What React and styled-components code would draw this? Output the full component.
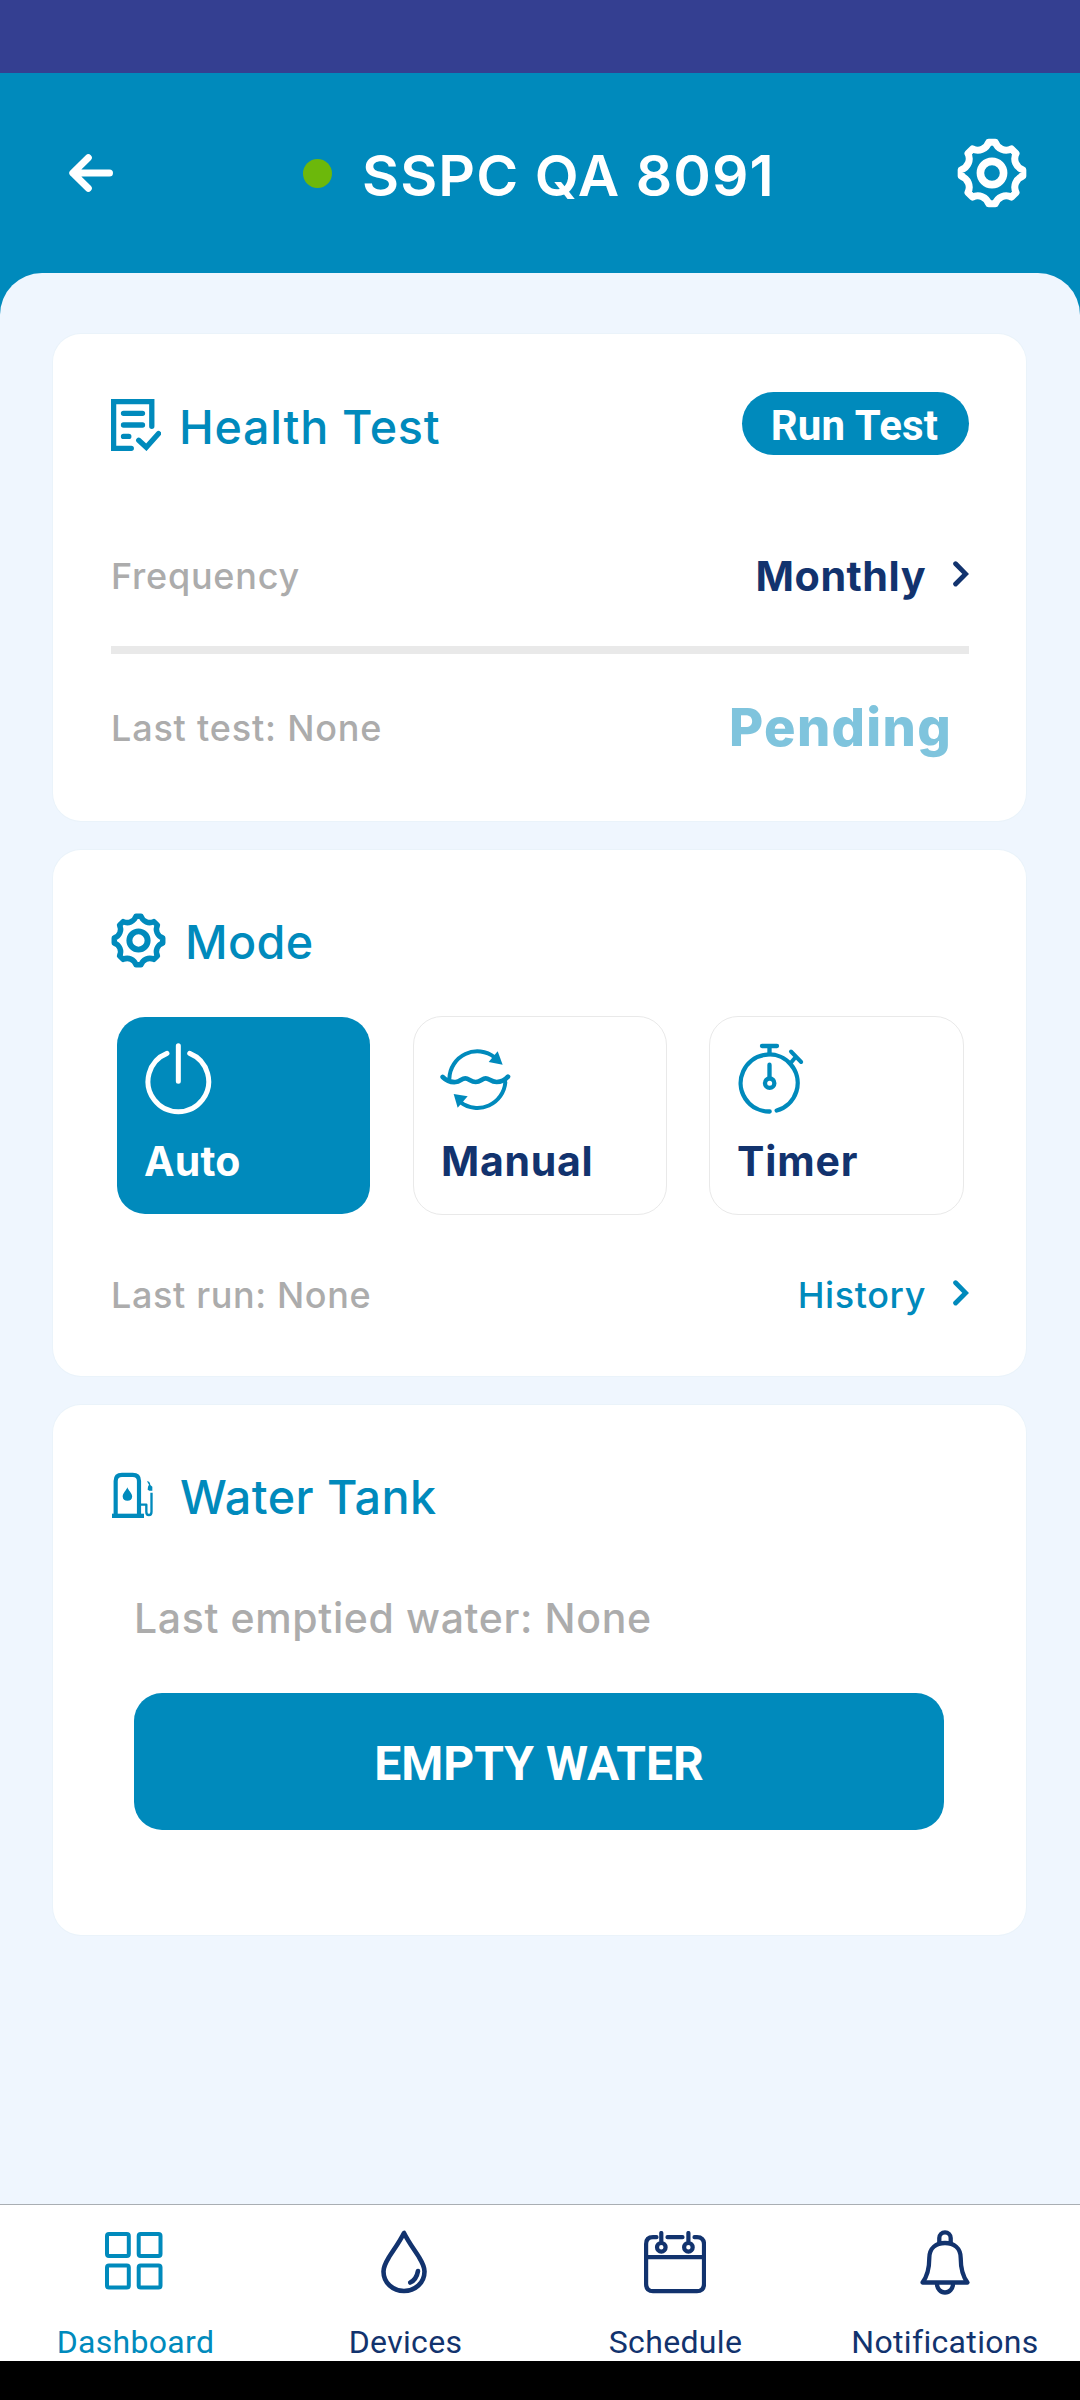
import React from "react";
import styled, { createGlobalStyle, ThemeProvider } from "styled-components";

const theme = {
  blue: "#008abc",
  navy: "#12336e",
  purple: "#343f91",
  page: "#eff6fe",
  grey: "#acacac",
  line: "#e9e9e9",
  pending: "#7fc4dd",
  green: "#6cb80b",
};

const GlobalStyle = createGlobalStyle`
  * { box-sizing: border-box; }
  body { margin: 0; background: #000; }
`;

const Screen = styled.div`
  display: flex;
  flex-direction: column;
  width: 1080px;
  height: 2400px;
  overflow: hidden;
  font-family: Inter, "Liberation Sans", sans-serif;
  background: ${(p) => p.theme.blue};
`;

const StatusBar = styled.div`
  flex: none;
  height: 73px;
  background: ${(p) => p.theme.purple};
`;

const Header = styled.header`
  flex: none;
  display: grid;
  grid-template-columns: 44px 1fr 70px;
  align-items: center;
  height: 200px;
  padding: 0 53px 0 69px;
  color: #fff;
`;

const DeviceTitle = styled.div`
  display: flex;
  align-items: center;
  gap: 30px;
  padding-left: 190px;
`;

const StatusDot = styled.span`
  width: 29px;
  height: 29px;
  border-radius: 50%;
  background: ${(p) => p.theme.green};
`;

const Title = styled.h1`
  margin: 0;
  padding-top: 5px;
  font-size: 57px;
  font-weight: 600;
  line-height: 60px;
  letter-spacing: 1.1px;
  white-space: nowrap;
`;

const Content = styled.main`
  flex: 1;
  display: flex;
  flex-direction: column;
  gap: 29px;
  padding: 61px 54px 0 53px;
  border-radius: 42px 42px 0 0;
  background: ${(p) => p.theme.page};
`;

const Card = styled.section`
  display: flex;
  flex-direction: column;
  height: ${(p) => p.$height}px;
  padding: ${(p) => p.$top}px 57px 0 58px;
  border-radius: 28px;
  background: #fff;
  box-shadow: 0 0 0 1px #eaf3fa;
`;

const Row = styled.div`
  display: flex;
  align-items: center;
  justify-content: space-between;
  height: ${(p) => p.$height || 50}px;
  margin-top: ${(p) => p.$gap || 0}px;
`;

const Heading = styled.div`
  display: flex;
  align-items: center;
  gap: ${(p) => p.$gap}px;
  height: ${(p) => p.$height}px;
  padding-top: ${(p) => p.$top || 0}px;
  color: ${(p) => p.theme.blue};
`;

const HeadingText = styled.h2`
  margin: 0;
  padding-top: ${(p) => p.$drop || 4}px;
  font-size: 46.7px;
  font-weight: 500;
  line-height: 50px;
  letter-spacing: ${(p) => p.$spacing}px;
  white-space: nowrap;
`;

const Muted = styled.span`
  font-size: ${(p) => (p.$large ? 41 : 36)}px;
  font-weight: 500;
  line-height: 50px;
  letter-spacing: ${(p) => p.$spacing}px;
  color: ${(p) => p.theme.grey};
  white-space: nowrap;
`;

const RunButton = styled.button`
  width: 227px;
  height: 63px;
  padding: 4px 2px 0 0;
  border: 0;
  border-radius: 32px;
  background: ${(p) => p.theme.blue};
  color: #fff;
  font: 700 42px/59px Roboto, sans-serif;
  letter-spacing: 0.2px;
`;

const Link = styled.a`
  display: flex;
  align-items: center;
  gap: 27px;
  color: ${(p) => (p.$strong ? p.theme.navy : p.theme.blue)};
  font-size: ${(p) => (p.$strong ? 41.3 : 36)}px;
  font-weight: ${(p) => (p.$strong ? 700 : 500)};
  line-height: 50px;
  letter-spacing: ${(p) => (p.$strong ? 0.5 : 0.6)}px;
`;

const Divider = styled.hr`
  width: 100%;
  height: 8px;
  margin: 45px 0 0;
  border: 0;
  background: ${(p) => p.theme.line};
`;

const Pending = styled.strong`
  margin-right: 17px;
  font-size: 52.5px;
  font-weight: 800;
  line-height: 59px;
  letter-spacing: 1.3px;
  color: ${(p) => p.theme.pending};
`;

const Modes = styled.div`
  display: grid;
  grid-template-columns: 255px 254px 255px;
  justify-content: space-between;
  height: 199px;
  margin: 49px 5px 0;
`;

const ModeTile = styled.button`
  display: flex;
  flex-direction: column;
  align-items: flex-start;
  padding: 25px 27px 0;
  border: 1px solid ${(p) => (p.$active ? "transparent" : p.theme.line)};
  border-radius: 29px;
  background: ${(p) => (p.$active ? p.theme.blue : "#fff")};
  background-clip: padding-box;
  color: ${(p) => (p.$active ? "#fff" : p.theme.blue)};
`;

const ModeIcon = styled.span`
  display: flex;
  align-items: center;
  height: 73px;
  margin-left: ${(p) => p.$shift || 0}px;
`;

const ModeName = styled.span`
  margin-top: 21px;
  color: ${(p) => (p.$active ? "#fff" : p.theme.navy)};
  font: 700 41px/50px Inter, sans-serif;
  letter-spacing: ${(p) => p.$spacing}px;
`;

const TankBody = styled.div`
  display: flex;
  flex-direction: column;
  gap: 50px;
  margin-top: 71px;
  padding: 0 25px 0 23px;
`;

const TankNote = styled.div`
  height: 50px;
  line-height: 50px;
`;

const EmptyButton = styled.button`
  height: 137px;
  padding: 5px 0 0 0;
  border: 0;
  border-radius: 28px;
  background: ${(p) => p.theme.blue};
  color: #fff;
  font: 700 48px/60px Roboto, sans-serif;
  text-align: center;
`;

const Nav = styled.nav`
  flex: none;
  display: grid;
  grid-template-columns: repeat(4, 1fr);
  height: 157px;
  border-top: 1px solid #a9aeb3;
  background: #fff;
`;

const NavItem = styled.a`
  display: flex;
  flex-direction: column;
  align-items: center;
  padding-top: 24px;
  color: ${(p) => (p.$active ? p.theme.blue : p.theme.navy)};
`;

const NavIcon = styled.span`
  display: flex;
  align-items: flex-start;
  height: 65px;
  padding-top: ${(p) => p.$top}px;
  margin-left: ${(p) => p.$shift || 0}px;
`;

const NavLabel = styled.span`
  margin-top: 28px;
  font: 400 32px/40px Roboto, sans-serif;
  letter-spacing: 0.33px;
  margin-left: ${(p) => p.$nudge || 0}px;
`;

const SystemBar = styled.div`
  flex: none;
  height: 39px;
  background: #000;
`;

const Icon = styled.svg.attrs({
  fill: "none",
  stroke: "currentColor",
  strokeLinecap: "round",
  strokeLinejoin: "round",
})`
  display: block;
  flex: none;
`;

const ChevronIcon = styled(Icon)`
  margin-bottom: 4px;
`;

const gearOutline = (() => {
  const point = (deg) => {
    const a = (deg * Math.PI) / 180;
    return `${(35 + 31 * Math.sin(a)).toFixed(2)} ${(35 - 31 * Math.cos(a)).toFixed(2)}`;
  };
  let d = `M${point(-6)}`;
  for (let i = 0; i < 8; i++) {
    d += ` L${point(i * 45 + 6)} A11.5 11.5 0 0 0 ${point(i * 45 + 39)}`;
  }
  return d + "Z";
})();

const Gear = ({ size }) => (
  <Icon width={size} height={size} viewBox="0 0 70 70" strokeWidth="7">
    <path d={gearOutline} />
    <circle cx="35" cy="35" r="11.6" strokeWidth="7.6" />
  </Icon>
);

const BackArrow = () => (
  <Icon width="44" height="38" viewBox="0 0 44 38" strokeWidth="7">
    <path d="M40.5 19H4M19.3 3.8L3.8 19l15.5 15.2" />
  </Icon>
);

const Checklist = () => (
  <Icon width="50" height="52" viewBox="0 0 50 52" strokeWidth="5.3">
    <path d="M20.3 49.3H2.6V2.6H40.8V27.3" strokeLinejoin="miter" />
    <path d="M12.5 14.3H31.5M12.5 26H31.5M12.5 37.4H17.8" />
    <path d="M27.7 41.2L35.3 48.3L47.6 34.6" strokeLinejoin="miter" />
  </Icon>
);

const Chevron = () => (
  <ChevronIcon width="16" height="26" viewBox="0 0 16 26" strokeWidth="4.8">
    <path d="M2.6 2.8L12.6 12.9L2.6 23" strokeLinejoin="miter" />
  </ChevronIcon>
);

const Power = () => (
  <Icon width="68" height="73" viewBox="315 486 204 219" strokeWidth="15">
    <path d="M381 520A91 91 0 1 0 449 520M415 497V604" />
  </Icon>
);

const Cycle = () => (
  <Icon width="71" height="64" viewBox="120 198 213 192" strokeWidth="12">
    <path d="M148 293A84 84 0 0 1 284 229" />
    <path d="M316 304A84 84 0 0 1 182 364" />
    <path
      d="M128 288C140 300 155 304 167 303C180 302 185 292 196 292C207 292 212 303 227 303C242 303 246 292 257 292C268 292 272 303 290 303C305 303 315 297 324 287"
      strokeWidth="14"
    />
    <path d="M293 211L308 251L266 243Z" fill="currentColor" stroke="none" />
    <path d="M161 339L203 346L173 380Z" fill="currentColor" stroke="none" />
  </Icon>
);

const Stopwatch = () => (
  <Icon width="68" height="73" viewBox="171 186 204 219" strokeWidth="13">
    <path d="M269 394.5A85.5 85.5 0 1 1 290 391.5" />
    <path d="M246 198H291M268.500 200V222M268.500 254V290" />
    <path d="M333 214.5L363.5 246M347 231L334 247" strokeWidth="12" />
    <circle cx="269" cy="309.500" r="14" />
  </Icon>
);

const Tank = () => (
  <Icon width="43" height="47" viewBox="210 636 129 141" strokeWidth="12.5">
    <path d="M224 764V663Q224 644.5 243 644.5H275Q294 644.5 294 663V764" strokeLinecap="butt" />
    <path d="M213 767.5H309" strokeWidth="13" strokeLinecap="butt" />
    <path d="M298 734H316V755Q316 765 323.5 765Q331.5 765 331.5 755V698" strokeWidth="7" strokeLinecap="butt" />
    <path
      d="M259 682C256 691 245 700 245 709.5A14.300 14.300 0 0 0 273.5 709.5C273.5 700 262 691 259 682Z"
      fill="currentColor"
      stroke="none"
    />
    <path
      d="M318 664Q325 663 327 670L328 675L334 680V692Q327 694 320 689Q320 678 324 674Z"
      fill="currentColor"
      stroke="none"
    />
  </Icon>
);

const Grid = () => (
  <Icon width="58" height="58" viewBox="0 0 58 58" strokeWidth="4">
    <rect x="2" y="2" width="21.8" height="22" rx="2" />
    <rect x="33.7" y="2" width="21.8" height="22" rx="2" />
    <rect x="2" y="33.6" width="21.8" height="22" rx="2" />
    <rect x="33.7" y="33.6" width="21.8" height="22" rx="2" />
  </Icon>
);

const Drop = () => (
  <Icon width="46" height="64" viewBox="0 0 46 64" strokeWidth="4.6">
    <path d="M23 3C18 13 12 20.5 7.5 28C4.5 33 2.5 37 2.5 41.5C2.5 53 12 61 23 61S43.500 53 43.5 41.5C43.5 37 41.5 33 38.5 28C34 20.5 28 13 23 3Z" />
    <path d="M37 41Q35.5 49.5 29.2 52.5" />
  </Icon>
);

const Calendar = () => (
  <Icon width="62" height="63" viewBox="0 0 62 63" strokeWidth="4.2">
    <path d="M12.5 6.2H9Q2.1 6.2 2.1 13V53Q2.1 60.2 9 60.2H53Q60 60.2 60 53V13Q60 6.2 53 6.2H50.5" />
    <path d="M23.5 6.2H38.5M2.1 26.2H60M17.3 2V10M44.4 2V10" />
    <circle cx="17.3" cy="16.3" r="4.3" />
    <circle cx="44.4" cy="16.3" r="4.3" />
  </Icon>
);

const Bell = () => (
  <Icon width="52" height="66" viewBox="0 0 52 66" strokeWidth="4.3">
    <path d="M20.3 12V8A5.700 5.700 0 0 1 31.7 8V12" />
    <path d="M3.5 52.5C8.5 46 10.3 37 10.3 28C10.3 18 17 13 26 13S41.7 18 41.7 28C41.7 37 43.5 46 48.5 52.5Z" />
    <path d="M18 54A8 8.500 0 0 0 34 54" />
  </Icon>
);

const modes = [
  { name: "Auto", icon: Power, spacing: 0.18, shift: 1, active: true },
  { name: "Manual", icon: Cycle, spacing: 0.71, shift: -1 },
  { name: "Timer", icon: Stopwatch, spacing: 0.85, shift: 0 },
];

const tabs = [
  { name: "Dashboard", icon: Grid, top: 3, shift: -3, nudge: 1, active: true },
  { name: "Devices", icon: Drop, top: 1, shift: -2, nudge: 1 },
  { name: "Schedule", icon: Calendar, top: 2, shift: 0, nudge: 1 },
  { name: "Notifications", icon: Bell, top: 1, shift: 0, nudge: 0 },
];

export default function App() {
  return (
    <ThemeProvider theme={theme}>
      <GlobalStyle />
      <Screen>
        <StatusBar />
        <Header>
          <BackArrow />
          <DeviceTitle>
            <StatusDot />
            <Title>SSPC QA 8091</Title>
          </DeviceTitle>
          <Gear size={70} />
        </Header>

        <Content>
          <Card $height={487} $top={58}>
            <Row $height={63}>
              <Heading $gap={18} $height={63} $top={3}>
                <Checklist />
                <HeadingText $spacing={0.72}>Health Test</HeadingText>
              </Heading>
              <RunButton>Run Test</RunButton>
            </Row>
            <Row $gap={96}>
              <Muted $spacing={0.75}>Frequency</Muted>
              <Link $strong>
                Monthly
                <Chevron />
              </Link>
            </Row>
            <Divider />
            <Row $height={59} $gap={44}>
              <Muted $spacing={0.81}>Last test: None</Muted>
              <Pending>Pending</Pending>
            </Row>
          </Card>

          <Card $height={526} $top={63}>
            <Heading $gap={19} $height={54}>
              <Gear size={55} />
              <HeadingText $spacing={0.4} $drop={3}>
                Mode
              </HeadingText>
            </Heading>
            <Modes>
              {modes.map(({ name, icon: Glyph, spacing, shift, active }) => (
                <ModeTile key={name} $active={active}>
                  <ModeIcon $shift={shift}>
                    <Glyph />
                  </ModeIcon>
                  <ModeName $active={active} $spacing={spacing}>
                    {name}
                  </ModeName>
                </ModeTile>
              ))}
            </Modes>
            <Row $gap={55}>
              <Muted $spacing={0.62}>Last run: None</Muted>
              <Link>
                History
                <Chevron />
              </Link>
            </Row>
          </Card>

          <Card $height={530} $top={63}>
            <Heading $gap={26} $height={54}>
              <Tank />
              <HeadingText $spacing={0.45}>Water Tank</HeadingText>
            </Heading>
            <TankBody>
              <TankNote>
                <Muted $large $spacing={0.63}>
                  Last emptied water: None
                </Muted>
              </TankNote>
              <EmptyButton>EMPTY WATER</EmptyButton>
            </TankBody>
          </Card>
        </Content>

        <Nav>
          {tabs.map(({ name, icon: Glyph, top, shift, nudge, active }) => (
            <NavItem key={name} $active={active}>
              <NavIcon $top={top} $shift={shift}>
                <Glyph />
              </NavIcon>
              <NavLabel $nudge={nudge}>{name}</NavLabel>
            </NavItem>
          ))}
        </Nav>
        <SystemBar />
      </Screen>
    </ThemeProvider>
  );
}
